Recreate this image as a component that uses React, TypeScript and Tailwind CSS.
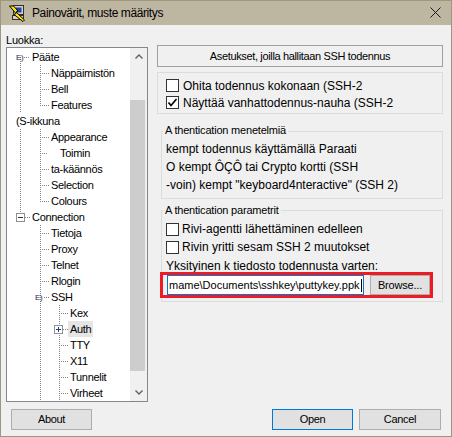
import React from 'react';

type LineMode = 'full' | 'top' | 'bottom';
type Row = {
  label: string;
  x: number;
  lines: [number, LineMode][];
  h?: [number, number];
  glyph?: { type: 'E' | 'minus' | 'plus'; x: number };
  selected?: boolean;
};

const L0L1: [number, LineMode][] = [[20, 'full'], [40, 'full']];
const L1L2: [number, LineMode][] = [[40, 'full'], [59, 'full']];

const rows: Row[] = [
  { label: 'Pääte', x: 32, lines: [[20, 'bottom']], h: [24, 30], glyph: { type: 'E', x: 16 } },
  { label: 'Näppäimistön', x: 51, lines: L0L1, h: [40, 49] },
  { label: 'Bell', x: 51, lines: L0L1, h: [40, 49] },
  { label: 'Features', x: 51, lines: [[20, 'full'], [40, 'top']], h: [40, 49] },
  { label: '(S-ikkuna', x: 16, lines: [] },
  { label: 'Appearance', x: 51, lines: L0L1, h: [40, 49] },
  { label: 'Toimin', x: 60, lines: L0L1, h: [40, 47] },
  { label: 'ta-käännös', x: 51, lines: L0L1, h: [40, 49] },
  { label: 'Selection', x: 51, lines: L0L1, h: [40, 49] },
  { label: 'Colours', x: 51, lines: [[20, 'full'], [40, 'top']], h: [40, 49] },
  { label: 'Connection', x: 32, lines: [[20, 'top']], h: [25, 30], glyph: { type: 'minus', x: 16 } },
  { label: 'Tietoja', x: 51, lines: [[40, 'full']], h: [40, 49] },
  { label: 'Proxy', x: 51, lines: [[40, 'full']], h: [40, 49] },
  { label: 'Telnet', x: 51, lines: [[40, 'full']], h: [40, 49] },
  { label: 'Rlogin', x: 51, lines: [[40, 'full']], h: [40, 49] },
  { label: 'SSH', x: 51, lines: [[40, 'full']], h: [44, 49], glyph: { type: 'E', x: 35 } },
  { label: 'Kex', x: 70, lines: L1L2, h: [59, 68] },
  { label: 'Auth', x: 70, lines: L1L2, h: [63, 68], glyph: { type: 'plus', x: 54 }, selected: true },
  { label: 'TTY', x: 70, lines: L1L2, h: [59, 68] },
  { label: 'X11', x: 70, lines: L1L2, h: [59, 68] },
  { label: 'Tunnelit', x: 70, lines: L1L2, h: [59, 68] },
  { label: 'Virheet', x: 70, lines: L1L2, h: [59, 68] },
];

function TreeRow({ row }: { row: Row }) {
  const w = row.x - 9;
  const L = (x: number) => x - 7 + 0.5;
  const dot = '#858585';
  return (
    <div className="flex h-[16px] items-center">
      <svg width={w} height={16} className="shrink-0" shapeRendering="crispEdges">
        {row.lines.map(([x, m], i) => {
          const y1 = m === 'bottom' ? 8 : 0;
          const y2 = m === 'top' ? 9 : 16;
          return <line key={i} x1={L(x)} x2={L(x)} y1={y1} y2={y2} stroke={dot} strokeDasharray="1 1" />;
        })}
        {row.h && (
          <line x1={row.h[0] - 7} x2={row.h[1] - 7 + 1} y1={8.5} y2={8.5} stroke={dot} strokeDasharray="1 1" />
        )}
        {row.glyph && row.glyph.type === 'E' && (
          <text
            x={row.glyph.x - 7}
            y={11}
            fontSize={8}
            fontFamily="Liberation Sans, Arial, sans-serif"
            fill="#1e2a50"
          >
            E)
          </text>
        )}
        {row.glyph && row.glyph.type === 'minus' && (
          <g>
            <rect x={row.glyph.x - 7 + 0.5} y={4.5} width={8} height={8} fill="#ffffff" stroke="#919191" />
            <line x1={row.glyph.x - 7 + 2} x2={row.glyph.x - 7 + 7} y1={8.5} y2={8.5} stroke="#333333" />
          </g>
        )}
        {row.glyph && row.glyph.type === 'plus' && (
          <g>
            <rect x={row.glyph.x - 7 + 0.5} y={4.5} width={8} height={8} fill="#ffffff" stroke="#919191" />
            <line x1={row.glyph.x - 7 + 2} x2={row.glyph.x - 7 + 7} y1={8.5} y2={8.5} stroke="#1e3c8c" />
            <line x1={row.glyph.x - 7 + 4.5} x2={row.glyph.x - 7 + 4.5} y1={6} y2={11} stroke="#1e3c8c" />
          </g>
        )}
      </svg>
      <span
        className={`px-[2px] leading-[16px] whitespace-nowrap ${row.selected ? 'bg-[#e5e5e5]' : ''}`}
      >
        {row.label}
      </span>
    </div>
  );
}

function Checkbox({ checked }: { checked?: boolean }) {
  return (
    <div className="w-[13px] h-[13px] shrink-0 border border-[#333333] bg-white flex items-center justify-center">
      {checked && (
        <svg width="11" height="11" viewBox="0 0 11 11">
          <polyline points="1.5,5.5 4,8.5 9.5,2" fill="none" stroke="#000000" strokeWidth="1.7" />
        </svg>
      )}
    </div>
  );
}

function Chevron({ up }: { up?: boolean }) {
  return (
    <svg width="8" height="5" viewBox="0 0 8 5">
      <polyline
        points={up ? '0.5,4.5 4,1 7.5,4.5' : '0.5,0.5 4,4 7.5,0.5'}
        fill="none"
        stroke="#606060"
        strokeWidth="1.4"
      />
    </svg>
  );
}

export default function App() {
  return (
    <div className="w-[452px] h-[437px] border border-[#9d9781] bg-[#f0f0f0] flex flex-col overflow-hidden text-black font-['Liberation_Sans',Arial,sans-serif]">
      {/* Title bar */}
      <div className="h-[24px] shrink-0 bg-[#bdb6a1] flex items-center">
        <svg width="18" height="18" viewBox="0 0 18 18" className="ml-[7px] shrink-0">
          <rect x="5.5" y="1.5" width="10" height="9" fill="#d4d0c8" stroke="#303030" />
          <rect x="7.5" y="3.5" width="6" height="5" fill="#2a3fa8" />
          <rect x="4.5" y="11.5" width="11" height="4" fill="#d4d0c8" stroke="#303030" />
          <polygon points="1.5,2 5.5,2 10,7 8,8 16.5,16 15,17.5 6,10.5 8,9.5" fill="#ffe600" stroke="#000000" strokeWidth="1" />
        </svg>
        <span className="ml-[6px] text-[12px] leading-[24px] tracking-[-0.4px] whitespace-nowrap">
          Painovärit, muste määritys
        </span>
        <div className="flex-1" />
        <svg width="11" height="11" viewBox="0 0 11 11" className="mr-[10px] mb-[2px] shrink-0">
          <line x1="0.5" y1="0.5" x2="10.5" y2="10.5" stroke="#1a1a1a" strokeWidth="1" />
          <line x1="10.5" y1="0.5" x2="0.5" y2="10.5" stroke="#1a1a1a" strokeWidth="1" />
        </svg>
      </div>

      {/* Body */}
      <div className="flex-1 flex flex-col">
        <div className="flex">
          {/* Left column */}
          <div className="ml-[5px] w-[142px] pt-[8px] flex flex-col">
            <div className="text-[11px] leading-[14px] tracking-[-0.2px]">Luokka:</div>
            <div className="h-[355px] border border-[#828790] bg-white flex">
              <div className="flex-1 overflow-hidden pt-[1px] text-[11px] tracking-[-0.3px]">
                {rows.map((r, i) => (
                  <TreeRow key={i} row={r} />
                ))}
              </div>
              <div className="w-[17px] shrink-0 flex flex-col bg-[#f0f0f0]">
                <div className="h-[17px] flex items-center justify-center">
                  <Chevron up />
                </div>
                <div className="flex-1 flex flex-col">
                  <div className="h-[35px]" />
                  <div className="w-[15px] h-[271px] bg-[#cdcdcd]" />
                </div>
                <div className="h-[17px] flex items-center justify-center">
                  <Chevron />
                </div>
              </div>
            </div>
          </div>

          {/* Right column */}
          <div className="ml-[9px] w-[286px] pt-[20px] flex flex-col">
            <div className="h-[22px] border border-[#a0a0a0] flex items-center justify-center text-[11px] tracking-[-0.35px] whitespace-nowrap">
              Asetukset, joilla hallitaan SSH todennus
            </div>

            <div className="mt-[5px] border border-[#dcdcdc] pt-[4px] pb-[2px] pl-[8px] flex flex-col">
              <div className="h-[17px] flex items-center">
                <Checkbox />
                <span className="ml-[4px] text-[12px] whitespace-nowrap">Ohita todennus kokonaan (SSH-2</span>
              </div>
              <div className="h-[17px] flex items-center">
                <Checkbox checked />
                <span className="ml-[4px] text-[12px] whitespace-nowrap">Näyttää vanhattodennus-nauha (SSH-2</span>
              </div>
            </div>

            <div className="mt-[17px] ml-[4px] border border-[#dcdcdc] pb-[4px] flex flex-col">
              <div className="-mt-[9px] ml-[1px] px-[2px] self-start bg-[#f0f0f0] text-[11px] leading-[14px] tracking-[-0.2px] whitespace-nowrap">
                A thentication menetelmiä
              </div>
              <div className="mt-[3px] pl-[4px] text-[12px] leading-[18px] whitespace-nowrap">
                <div>kempt todennus käyttämällä Paraati</div>
                <div>O kempt ÔÇÔ tai Crypto kortti (SSH</div>
                <div>-voin) kempt "keyboard4nteractive" (SSH 2)</div>
              </div>
            </div>

            <div className="mt-[11px] ml-[4px] border border-[#dcdcdc] pb-[3px] flex flex-col">
              <div className="-mt-[8px] ml-[1px] px-[2px] self-start bg-[#f0f0f0] text-[11px] leading-[14px] tracking-[-0.2px] whitespace-nowrap">
                A thentication parametrit
              </div>
              <div className="mt-[3px] pl-[4px] h-[18px] flex items-center">
                <Checkbox />
                <span className="ml-[3px] text-[12px] whitespace-nowrap">Rivi-agentti lähettäminen edelleen</span>
              </div>
              <div className="pl-[4px] h-[18px] flex items-center">
                <Checkbox />
                <span className="ml-[3px] text-[12px] whitespace-nowrap">Rivin yritti sesam SSH 2 muutokset</span>
              </div>
              <div className="mt-[3px] pl-[4px] h-[13px] overflow-hidden text-[12px] leading-[14px] whitespace-nowrap">
                Yksityinen k tiedosto todennusta varten:
              </div>
              <div className="-ml-[2px] w-[273px] h-[26px] border-[3px] border-[#ed1c24] flex items-center pl-[4px]">
                <div className="w-[197px] h-[20px] shrink-0 border border-[#0078d7] bg-white flex items-center pl-[1px] overflow-hidden whitespace-nowrap text-[11px]">
                  <span>mame\Documents\sshkey\puttykey.ppk</span>
                  <span className="ml-[1px] w-px h-[13px] bg-black shrink-0" />
                </div>
                <div className="ml-[6px] w-[60px] h-[20px] shrink-0 border border-[#adadad] bg-[#e1e1e1] flex items-center justify-center text-[11px] tracking-[-0.2px]">
                  Browse...
                </div>
              </div>
            </div>
          </div>
        </div>

        {/* Footer */}
        <div className="mt-[7px] h-[21px] flex pl-[10px] pr-[10px]">
          <div className="w-[81px] h-[21px] border border-[#adadad] bg-[#e1e1e1] flex items-center justify-center text-[11px] tracking-[-0.3px]">
            About
          </div>
          <div className="flex-1" />
          <div className="w-[81px] h-[21px] border border-[#0078d7] bg-[#e1e1e1] flex items-center justify-center text-[11px] tracking-[-0.3px]">
            Open
          </div>
          <div className="ml-[6px] w-[82px] h-[21px] border border-[#adadad] bg-[#e1e1e1] flex items-center justify-center text-[11px] tracking-[-0.3px]">
            Cancel
          </div>
        </div>
      </div>
    </div>
  );
}
